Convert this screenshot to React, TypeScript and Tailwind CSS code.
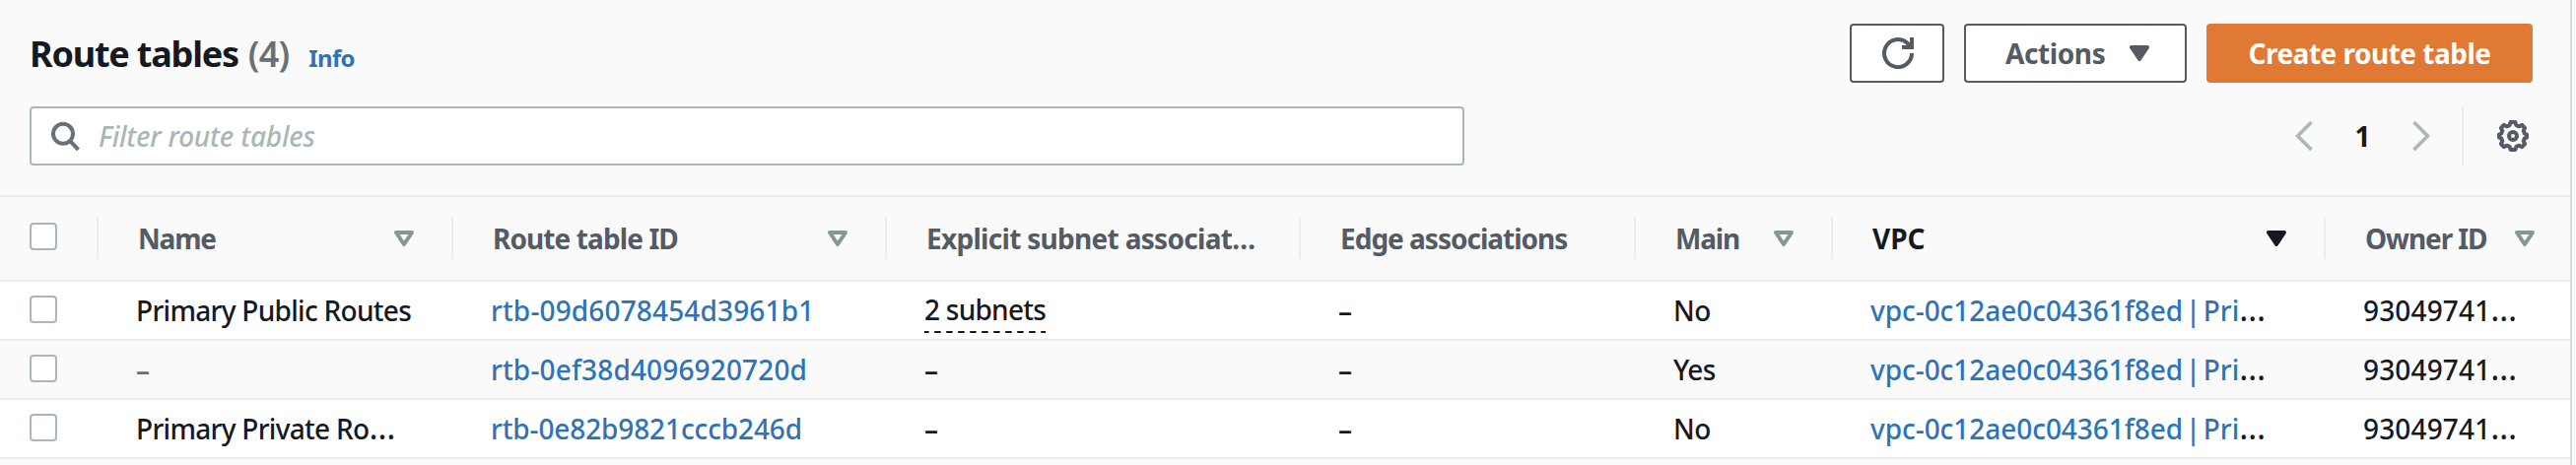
import type { ReactNode } from "react";

const COLS = "grid grid-cols-[100px_360px_440px_420px_340px_200px_500px_248px]";

type Sort = "none" | "open" | "active";

const headers: { label: string; sort: Sort; tracking: string }[] = [
  { label: "Name", sort: "open", tracking: "tracking-[-1.2px]" },
  { label: "Route table ID", sort: "open", tracking: "tracking-[-0.9px]" },
  { label: "Explicit subnet associat…", sort: "none", tracking: "tracking-[-0.7px]" },
  { label: "Edge associations", sort: "none", tracking: "tracking-[-1px]" },
  { label: "Main", sort: "open", tracking: "tracking-[-1.2px]" },
  { label: "VPC", sort: "active", tracking: "" },
  { label: "Owner ID", sort: "open", tracking: "tracking-[-1.1px]" },
];

const rows = [
  { name: "Primary Public Routes", id: "rtb-09d6078454d3961b1", idTracking: "tracking-[0.15px]", subnets: "2 subnets", main: "No" },
  { name: "–", id: "rtb-0ef38d4096920720d", idTracking: "tracking-[0.15px]", subnets: "–", main: "Yes" },
  { name: "Primary Private Ro…", id: "rtb-0e82b9821cccb246d", idTracking: "tracking-[-0.12px]", subnets: "–", main: "No" },
];

function SortIcon({ sort }: { sort: Sort }) {
  if (sort === "none") return null;
  return (
    <svg width="20" height="16" viewBox="0 0 20 16" className={sort === "active" ? "text-[#16191f]" : "text-[#879596]"}>
      {sort === "active" ? (
        <path d="M2 2H18L10 14Z" fill="currentColor" stroke="currentColor" strokeWidth="4" strokeLinejoin="round" />
      ) : (
        <path d="M2 2H18L10 14Z" fill="#fff" stroke="currentColor" strokeWidth="4" strokeLinejoin="round" />
      )}
    </svg>
  );
}

function Checkbox() {
  return <span className="block size-7 rounded-[4px] border-2 border-[#aab7b8] bg-white" />;
}

function Ellipsis() {
  return <span className="text-[34px] font-normal leading-none tracking-normal">…</span>;
}

function Cell({ children, className = "" }: { children: ReactNode; className?: string }) {
  return (
    <div className={`flex items-center pl-[38px] ${children === "–" ? "font-semibold" : ""} ${className}`}>
      <div className="h-10 whitespace-nowrap">{children}</div>
    </div>
  );
}

export default function App() {
  return (
    <div className="h-[472px] w-[2614px] overflow-hidden bg-[#fafafa] font-['Noto_Sans',sans-serif] text-[28px] font-medium leading-[40px] text-[#16191f]">
      <div className="h-full w-[2610px] border-r-2 border-[#d5dbdb]">
        <div className="flex h-[108px] items-start justify-between pl-[30px] pr-[38px] pt-6">
          <div className="flex items-baseline pt-px leading-[60px]">
            <h1 className="text-[36px] font-bold tracking-[-1.2px]">Route tables</h1>
            <span className="ml-[10px] text-[36px] font-semibold tracking-[-0.8px] text-[#687078]">(4)</span>
            <a className="ml-5 text-[24px] font-bold tracking-[-0.7px] text-[#2e73b8]">Info</a>
          </div>
          <div className="flex gap-5 font-bold text-[#545b64]">
            <button className="flex h-[60px] w-[96px] items-center justify-center rounded-[4px] border-2 border-[#545b64] bg-white pl-[2px]">
              <svg width="32" height="32" viewBox="0 0 32 32" fill="none" stroke="currentColor" strokeWidth="4">
                <path d="M30 16A14 14 0 1 1 25.5 5.8L28 8.5" />
                <path d="M30 0V10H20" />
                <path d="M23 9L30 3V10Z" fill="currentColor" stroke="none" />
              </svg>
            </button>
            <button className="flex h-[60px] w-[226px] items-center rounded-[4px] border-2 border-[#545b64] bg-white pl-10">
              <span className="w-[126px] text-left tracking-[-0.4px]">Actions</span>
              <svg width="20" height="16" viewBox="0 0 20 16">
                <path d="M2 2H18L10 14Z" fill="currentColor" stroke="currentColor" strokeWidth="4" strokeLinejoin="round" />
              </svg>
            </button>
            <button className="flex h-[60px] w-[331px] items-center justify-center rounded-[4px] bg-[#e07933] tracking-[-0.5px] text-white">Create route table</button>
          </div>
        </div>
        <div className="flex h-[90px] items-start justify-between pl-[30px] pr-[38px]">
          <div className="flex h-[60px] w-[1456px] items-center rounded-[4px] border-2 border-[#aab7b8] bg-white pl-5">
            <svg width="32" height="32" viewBox="0 0 32 32" fill="none" stroke="#687078" strokeWidth="4">
              <circle cx="12" cy="13.8" r="10" />
              <path d="M19 21L27.5 29.8" />
            </svg>
            <span className="ml-4 italic tracking-[-0.2px] text-[#aab7b8]">Filter route tables</span>
          </div>
          <div className="flex h-[60px] items-center">
            <svg width="18" height="32" viewBox="0 0 18 32" fill="none" stroke="#aab7b8" strokeWidth="3.6">
              <path d="M16.5 2L2.5 16L16.5 30" />
            </svg>
            <span className="w-[101px] text-center font-bold">1</span>
            <svg width="18" height="32" viewBox="0 0 18 32" fill="none" stroke="#aab7b8" strokeWidth="3.6">
              <path d="M1.5 2L15.5 16L1.5 30" />
            </svg>
            <div className="ml-8 h-full w-[2px] bg-[#eaeded]" />
            <svg className="ml-[34px] mr-1" width="32" height="32" viewBox="0 0 32 32" fill="none" stroke="#545b64" strokeWidth="4">
              <path strokeLinejoin="round" d="M13.6 2h4.8l1 3.2 2.8 1.1 3-1.4 2.9 2.9-1.4 3 1.1 2.8 2.2.8v3.2l-2.2.8-1.1 2.8 1.4 3-2.9 2.9-3-1.4-2.8 1.1-1 3.2h-4.8l-1-3.2-2.8-1.1-3 1.4-2.9-2.9 1.4-3-1.1-2.8L2 17.6v-3.2l2.2-.8 1.1-2.8-1.4-3 2.9-2.9 3 1.4 2.8-1.1z" />
              <circle cx="16" cy="16" r="4" />
            </svg>
          </div>
        </div>
        <div className={`${COLS} h-[88px] border-y-2 border-[#eaeded] font-bold text-[#545b64]`}>
          <div className="pl-[30px] pt-[26px]"><Checkbox /></div>
          {headers.map((h) => (
            <div key={h.label} className="flex items-center">
              <div className="-ml-[2px] h-[42px] w-[2px] shrink-0 bg-[#eaeded]" />
              <div className={`flex flex-1 items-center justify-between whitespace-nowrap pl-10 ${h.label === "Owner ID" ? "pr-9" : "pr-10"}`}>
                <span className={`${h.tracking} ${h.sort === "active" ? "text-[#16191f]" : ""}`}>{h.label}</span>
                <SortIcon sort={h.sort} />
              </div>
            </div>
          ))}
        </div>
        {rows.map((r, i) => (
          <div key={r.id} className={`${COLS} h-[60px] border-b-2 border-[#eaeded] ${i % 2 ? "bg-[#fafafa]" : "bg-white"}`}>
            <div className="pl-[30px] pt-[14px]"><Checkbox /></div>
            <Cell className={r.name === "–" ? "text-[#687078]" : "tracking-[-0.7px]"}>
              {r.name.endsWith("…") ? <>{r.name.slice(0, -1)}<Ellipsis /></> : r.name}
            </Cell>
            <Cell className={`text-[#2e73b8] ${r.idTracking}`}>{r.id}</Cell>
            <Cell>
              {r.subnets === "–" ? <span className="font-semibold">–</span> : (
                <span className="relative -top-px tracking-[-0.75px]">
                  {r.subnets}
                  <svg className="absolute left-0 top-[41px]" width="123" height="2">
                    <path d="M0 1H123" stroke="#16191f" strokeWidth="2" strokeDasharray="6.5 5.5" strokeDashoffset="1.8" />
                  </svg>
                </span>
              )}
            </Cell>
            <Cell>–</Cell>
            <Cell className="tracking-[-0.6px]">{r.main}</Cell>
            <Cell><a className="tracking-[-0.05px] [word-spacing:-4.5px] text-[#2e73b8]">vpc-0c12ae0c04361f8ed | Pri</a><Ellipsis /></Cell>
            <Cell><span className="tracking-[0.15px]">93049741</span><Ellipsis /></Cell>
          </div>
        ))}
      </div>
    </div>
  );
}
